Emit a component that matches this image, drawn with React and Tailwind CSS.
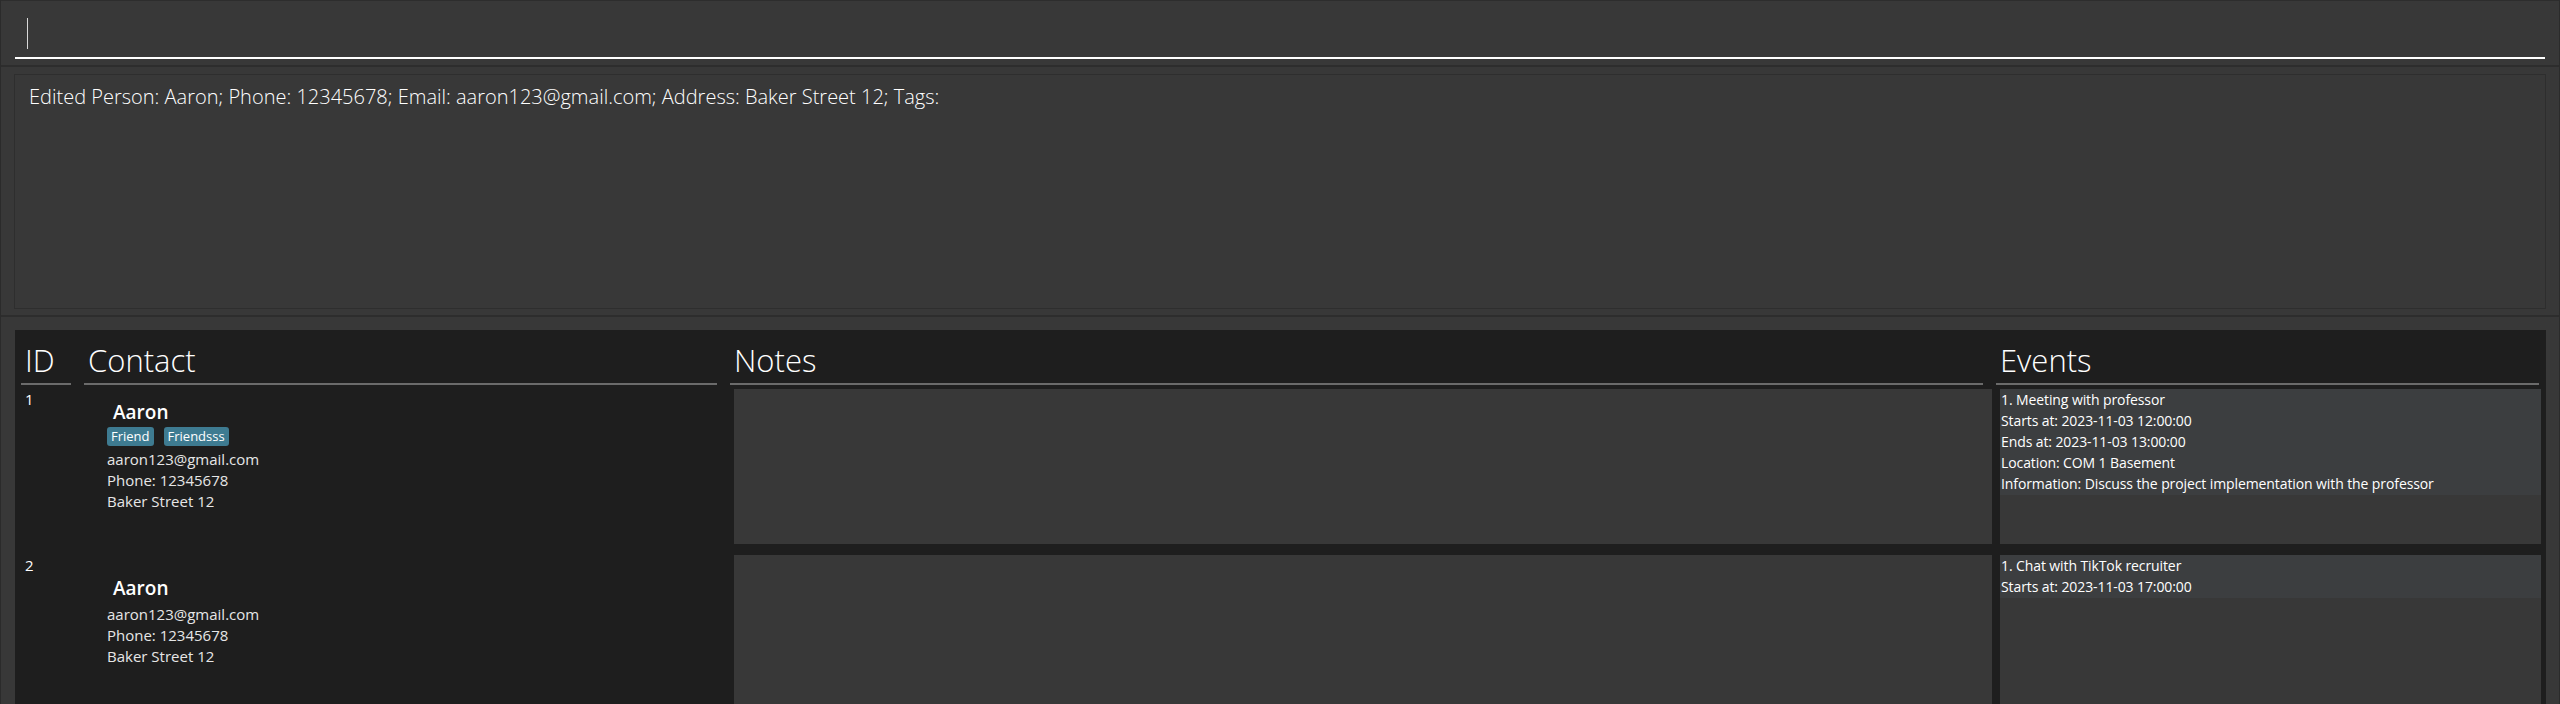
import React from 'react';

const persons = [
  {
    id: 1,
    name: 'Aaron',
    tags: ['Friend', 'Friendsss'],
    email: 'aaron123@gmail.com',
    phone: '12345678',
    address: 'Baker Street 12',
    events: [
      '1. Meeting with professor',
      'Starts at: 2023-11-03 12:00:00',
      'Ends at: 2023-11-03 13:00:00',
      'Location: COM 1 Basement',
      'Information: Discuss the project implementation with the professor',
    ],
  },
  {
    id: 2,
    name: 'Aaron',
    tags: [],
    email: 'aaron123@gmail.com',
    phone: '12345678',
    address: 'Baker Street 12',
    events: ['1. Chat with TikTok recruiter', 'Starts at: 2023-11-03 17:00:00'],
  },
];

const font = { fontFamily: '"Segoe UI", "Open Sans", "Noto Sans", sans-serif' };

const Header = ({ title, width, className = '', lineClass = '' }) => (
  <div className={`${width} ${className} shrink-0`}>
    <div className="pl-[4px] h-[40px] leading-[40px] text-[31px] font-light text-white">{title}</div>
    <div className={`mt-[3px] h-[2px] bg-[#6b6b6b] ${lineClass}`}></div>
  </div>
);

const PersonRow = ({ person }) => {
  const hasTags = person.tags.length > 0;
  return (
    <div className="flex h-[155px] shrink-0">
      <div className="w-[50px] shrink-0 pl-[4px] text-[15px] leading-[21px] text-white">{person.id}</div>
      <div className={`w-[633px] ml-[13px] shrink-0 pl-[23px] ${hasTags ? 'pt-[11px]' : 'pt-[21px]'}`}>
        <div className="pl-[6px] text-[19px] leading-[24px] font-semibold text-white">{person.name}</div>
        {hasTags && (
          <div className="flex gap-[10px] mt-[3px]">
            {person.tags.map((tag) => (
              <span
                key={tag}
                className="h-[19px] px-[4px] rounded-[3px] bg-[#3e7b91] text-[13px] leading-[19px] text-white"
              >
                {tag}
              </span>
            ))}
          </div>
        )}
        <div className={`${hasTags ? 'mt-[3px]' : 'mt-[4px]'} text-[15px] leading-[21px] text-[#e6e6e6]`}>
          <div>{person.email}</div>
          <div>Phone: {person.phone}</div>
          <div>{person.address}</div>
        </div>
      </div>
      <div className="w-[1262px] ml-[13px] shrink-0 pl-[4px]">
        <div className="h-full bg-[#383838]"></div>
      </div>
      <div className="w-[545px] ml-[4px] shrink-0 pl-[4px]">
        <div className="h-full bg-[#383838]">
          <div className="bg-[#3c3e40] pl-[1px] pb-[1px] text-[14px] leading-[21px] tracking-[-0.1px] text-white">
            {person.events.map((line) => (
              <div key={line}>{line}</div>
            ))}
          </div>
        </div>
      </div>
    </div>
  );
};

export default function App() {
  return (
    <div
      className="w-[2560px] h-[704px] overflow-hidden bg-[#383838] border-r border-l border-[#2b2b2b] flex flex-col"
      style={font}
    >
      {/* command box */}
      <div className="h-[65px] shrink-0 border-t border-[#2d2d2d] px-[14px]">
        <div className="h-[58px] border-b-2 border-white pl-[12px] pt-[17px]">
          <div className="w-px h-[31px] bg-[#d8d8d8]"></div>
        </div>
      </div>
      <div className="h-[2px] shrink-0 bg-[#2d2d2d]"></div>

      {/* result display */}
      <div className="h-[248px] shrink-0 pt-[7px] pb-[6px] pl-[13px] pr-[13px]">
        <div className="h-full border border-[#2e2e2e] pl-[14px] pt-[8px]">
          <div className="text-[20px] leading-[28px] font-light text-white">
            Edited Person: Aaron; Phone: 12345678; Email: aaron123@gmail.com; Address: Baker Street 12; Tags:
          </div>
        </div>
      </div>
      <div className="h-[2px] shrink-0 bg-[#2d2d2d]"></div>

      {/* list panel */}
      <div className="flex-1 min-h-0 pt-[13px] pl-[14px] pr-[13px]">
        <div className="h-full bg-[#1e1e1e] pl-[6px] pr-[6px] pt-[10px] flex flex-col overflow-hidden">
          <div className="flex shrink-0">
            <Header title="ID" width="w-[50px]" />
            <Header title="Contact" width="w-[633px]" className="ml-[13px]" />
            <Header title="Notes" width="w-[1262px]" className="ml-[13px]" lineClass="mr-[9px]" />
            <Header title="Events" width="w-[545px]" className="ml-[4px]" lineClass="mr-[2px]" />
          </div>
          <div className="mt-[4px] flex flex-col gap-[11px]">
            {persons.map((p) => (
              <PersonRow key={p.id} person={p} />
            ))}
          </div>
        </div>
      </div>
    </div>
  );
}
